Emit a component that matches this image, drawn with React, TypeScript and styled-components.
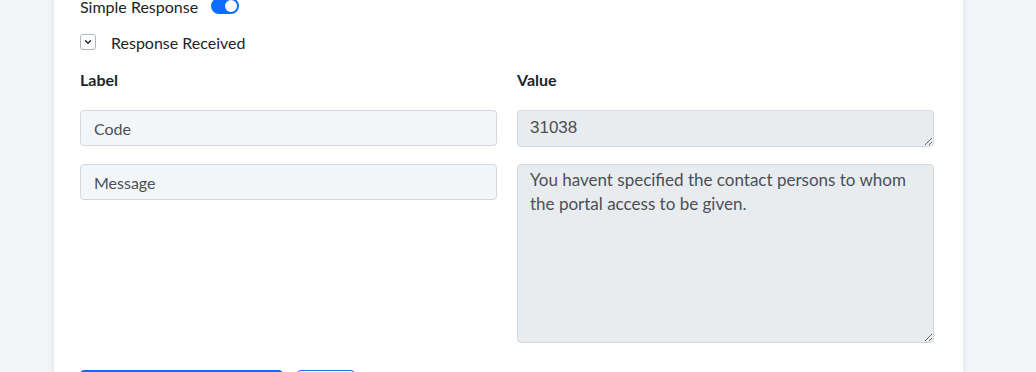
import React from "react";
import styled, { createGlobalStyle } from "styled-components";

const GlobalStyle = createGlobalStyle`
  html, body {
    margin: 0;
    padding: 0;
    background: #f3f6f9;
    overflow: hidden;
  }
  body {
    font-family: Lato, "Open Sans", sans-serif;
    color: #212529;
  }
`;

const Page = styled.div`
  height: 372px;
  padding: 0 73px 0 54px;
  overflow: hidden;
`;

const Card = styled.div`
  background: #ffffff;
  box-shadow: 0 0 6px rgba(50, 60, 80, 0.12);
  margin-top: -6px;
  padding: 0 29px 40px 26px;
  min-height: 420px;
`;

const ToggleRow = styled.div`
  display: flex;
  align-items: center;
  gap: 13px;
  height: 24px;
  font-size: 16px;
`;

const Switch = styled.span<{ on?: boolean }>`
  position: relative;
  display: inline-block;
  width: 28px;
  height: 16px;
  border-radius: 8px;
  background: ${(p) => (p.on ? "#0d6efd" : "#dee2e6")};
  &::after {
    content: "";
    position: absolute;
    top: 2px;
    left: ${(p) => (p.on ? "14px" : "2px")};
    width: 12px;
    height: 12px;
    border-radius: 50%;
    background: #fff;
  }
`;

const CollapseRow = styled.div`
  display: flex;
  align-items: center;
  gap: 15px;
  margin-top: 16px;
  height: 16px;
  font-size: 16px;
`;

const ChevronBox = styled.span`
  box-sizing: border-box;
  display: inline-flex;
  align-items: center;
  justify-content: center;
  width: 16px;
  height: 16px;
  border: 1px solid #adb5bd;
  border-radius: 3px;
  color: #212529;
`;

const Grid = styled.div`
  display: grid;
  grid-template-columns: 1fr 1fr;
  column-gap: 20px;
  row-gap: 17px;
  margin-top: 18px;
  align-items: start;
`;

const Heading = styled.div`
  font-weight: 700;
  font-size: 16px;
  height: 22px;
  line-height: 22px;
  margin: 1px 0 2px;
`;

const LabelInput = styled.input`
  box-sizing: border-box;
  width: 100%;
  height: 36px;
  padding: 0 13px;
  border: 1px solid #d3d8de;
  border-radius: 4px;
  background: #f3f6f9;
  color: #495057;
  font-family: Lato, "Open Sans", sans-serif;
  font-size: 16px;
  outline: none;
`;

const ValueArea = styled.textarea<{ tall?: boolean; mono?: boolean }>`
  box-sizing: border-box;
  display: block;
  width: 100%;
  height: ${(p) => (p.tall ? "179px" : "37px")};
  padding: ${(p) => (p.tall ? "3px 12px" : "5px 12px")};
  border: 1px solid #d3d8de;
  border-radius: 4px;
  background: #e9ecef;
  color: #495057;
  font-family: ${(p) =>
    p.mono ? '"Liberation Sans", Arial, sans-serif' : 'Lato, "Open Sans", sans-serif'};
  font-size: 17px;
  line-height: 24px;
  resize: vertical;
  outline: none;
`;

const Buttons = styled.div`
  display: flex;
  gap: 14px;
  margin-top: 27px;
`;

const PrimaryButton = styled.button`
  width: 203px;
  height: 36px;
  border: 1px solid #0d6efd;
  border-radius: 4px;
  background: #0d6efd;
  color: #fff;
  font-family: Lato, sans-serif;
  font-size: 16px;
`;

const OutlineButton = styled.button`
  width: 58px;
  height: 36px;
  border: 1px solid #0d6efd;
  border-radius: 4px;
  background: #fff;
  color: #0d6efd;
  font-family: Lato, sans-serif;
  font-size: 16px;
`;

const rows = [
  { label: "Code", value: "31038", tall: false },
  {
    label: "Message",
    value: "You havent specified the contact persons to whom the portal access to be given.",
    tall: true,
  },
];

export default function App() {
  return (
    <>
      <GlobalStyle />
      <Page>
        <Card>
          <ToggleRow>
            <span>Simple Response</span>
            <Switch on />
          </ToggleRow>
          <CollapseRow>
            <ChevronBox>
              <svg width="10" height="10" viewBox="0 0 10 10" fill="none">
                <path d="M2.5 3.8 L5 6.3 L7.5 3.8" stroke="#212529" strokeWidth="1.4" strokeLinecap="round" strokeLinejoin="round" />
              </svg>
            </ChevronBox>
            <span>Response Received</span>
          </CollapseRow>
          <Grid>
            <Heading>Label</Heading>
            <Heading>Value</Heading>
            {rows.map((r) => (
              <React.Fragment key={r.label}>
                <LabelInput defaultValue={r.label} />
                <ValueArea tall={r.tall} mono={!r.tall} readOnly defaultValue={r.value} />
              </React.Fragment>
            ))}
          </Grid>
          <Buttons>
            <PrimaryButton>Save</PrimaryButton>
            <OutlineButton>Back</OutlineButton>
          </Buttons>
        </Card>
      </Page>
    </>
  );
}
